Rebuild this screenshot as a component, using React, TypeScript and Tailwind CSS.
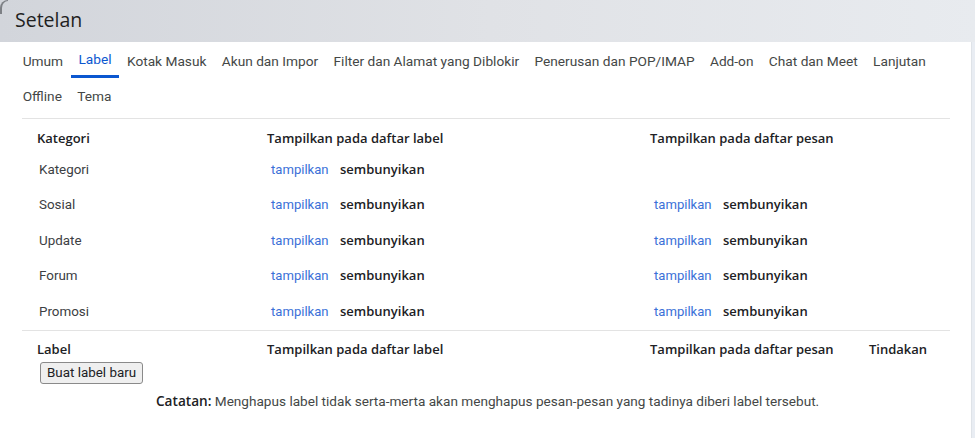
import React from "react";

const tabs1 = [
  "Umum",
  "Label",
  "Kotak Masuk",
  "Akun dan Impor",
  "Filter dan Alamat yang Diblokir",
  "Penerusan dan POP/IMAP",
  "Add-on",
  "Chat dan Meet",
  "Lanjutan",
];
const tabs2 = ["Offline", "Tema"];

const rows = [
  { name: "Kategori", msg: false },
  { name: "Sosial", msg: true },
  { name: "Update", msg: true },
  { name: "Forum", msg: true },
  { name: "Promosi", msg: true },
];

const boldFont = { fontFamily: "'Open Sans', Roboto, sans-serif" };

function ShowHide() {
  return (
    <div className="flex items-center pl-[4px]">
      <span className="text-[#3a70d8] w-[69px] text-[13.1px]">tampilkan</span>
      <span className="font-semibold text-[#202124]" style={boldFont}>
        sembunyikan
      </span>
    </div>
  );
}

export default function App() {
  return (
    <div
      className="w-[975px] h-[438px] overflow-hidden relative bg-[#e9edf3]"
      style={{ fontFamily: "Roboto, 'Liberation Sans', sans-serif" }}
    >
      <div className="h-[42px] bg-gradient-to-r from-[#d2d5db] via-[#e0e2e6] to-[#e8ebef] flex items-center pl-[15px] pb-[3px]">
        <span className="text-[19.5px] text-[#1f1f1f] leading-none" style={{ fontFamily: "'Open Sans', sans-serif" }}>
          Setelan
        </span>
      </div>
      <div className="absolute left-0 top-0 w-[8px] h-[14px] border-l-[2px] border-t-[1px] border-[#7d8085] rounded-tl-[10px]" />
      <div className="w-[972px] h-[396px] bg-white border-r border-[#dfe3e8]">
        <div className="pl-[15px] text-[13.7px] text-[#444746]">
          <div className="flex h-[36px] items-end">
            {tabs1.map((t) => (
              <div
                key={t}
                className={
                  t === "Label"
                    ? "px-[7.7px] h-[36px] flex items-center border-b-[3px] border-[#0b57d0] text-[#0b57d0] pt-[2px]"
                    : "px-[7.7px] h-[36px] flex items-center pt-[2px]"
                }
              >
                {t}
              </div>
            ))}
          </div>
          <div className="flex h-[40px] pb-[4px]">
            {tabs2.map((t) => (
              <div key={t} className="px-[7.7px] flex items-center">
                {t}
              </div>
            ))}
          </div>
        </div>
        <div className="ml-[22px] w-[928px] text-[13px]">
          <div className="border-t border-[#e3e3e3] pl-[15px]">
            <div
              className="grid grid-cols-[230px_383px_219px_1fr] h-[33px] pt-[6px] items-center font-semibold text-[#202124]"
              style={boldFont}
            >
              <div>Kategori</div>
              <div>Tampilkan pada daftar label</div>
              <div>Tampilkan pada daftar pesan</div>
              <div />
            </div>
            {rows.map((r) => (
              <div
                key={r.name}
                className="grid grid-cols-[230px_383px_219px_1fr] h-[35.5px] items-center"
              >
                <div className="pl-[2px] text-[#3c4043] text-[13.4px]">{r.name}</div>
                <ShowHide />
                <div>{r.msg ? <ShowHide /> : null}</div>
                <div />
              </div>
            ))}
          </div>
          <div className="border-t border-[#e3e3e3] pl-[15px]">
            <div
              className="grid grid-cols-[230px_383px_219px_1fr] h-[31px] pt-[7px] items-center font-semibold text-[#202124]"
              style={boldFont}
            >
              <div>Label</div>
              <div>Tampilkan pada daftar label</div>
              <div>Tampilkan pada daftar pesan</div>
              <div>Tindakan</div>
            </div>
            <div className="pl-[3px]">
              <button className="h-[22px] px-[6px] border border-[#8a8a8a] rounded-[3px] bg-[#efefef] text-[13.4px] text-[#202124] leading-none">
                Buat label baru
              </button>
            </div>
            <div className="pl-[119px] pt-[7px] text-[#444746] text-[13.6px]">
              <span className="font-semibold text-[#202124]" style={boldFont}>
                Catatan:
              </span>{" "}
              Menghapus label tidak serta-merta akan menghapus pesan-pesan yang tadinya diberi label tersebut.
            </div>
          </div>
        </div>
      </div>
    </div>
  );
}
